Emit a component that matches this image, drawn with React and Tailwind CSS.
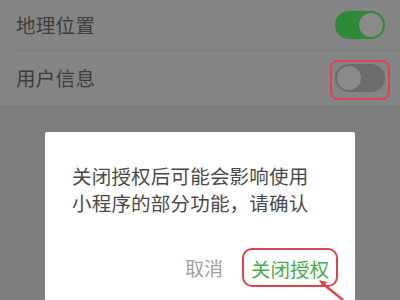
import React from 'react';

const font = { fontFamily: '"Noto Sans CJK SC", "Noto Sans", sans-serif' };

const Toggle = ({ on }) => (
  <div
    className={`w-[50px] h-[28px] rounded-full p-[2px] flex items-center ${
      on ? 'bg-[#2f8a37] justify-end' : 'bg-[#6c6c6c] justify-start'
    }`}
  >
    <div className="w-[24px] h-[24px] rounded-full bg-[#8a8a8a]" />
  </div>
);

export default function App() {
  return (
    <div
      className="relative w-[400px] h-[300px] overflow-hidden bg-[#7e7e7e]"
      style={font}
    >
      {/* settings list (dimmed) */}
      <div className="bg-[#858585] pl-[16px]">
        <div className="h-[51px] flex items-center justify-between pr-[15px] border-b border-[#7b7b7b]">
          <span className="text-[19.5px] text-[#3d3d3d] tracking-[0.3px]">地理位置</span>
          <Toggle on />
        </div>
        <div className="h-[54px] flex items-center justify-between pr-[15px]">
          <span className="text-[19.5px] text-[#3d3d3d] tracking-[0.3px]">用户信息</span>
          <Toggle />
        </div>
      </div>

      {/* annotation around toggle */}
      <div className="absolute left-[330px] top-[60px] w-[60px] h-[40px] rounded-[8px] border-2 border-[#e0434c]" />

      {/* dialog */}
      <div className="absolute left-[45px] top-[132px] w-[310px] h-[200px] bg-white rounded-[2px]">
        <div className="pt-[30px] pl-[27px] pr-[20px] text-[19.5px] leading-[27px] text-[#4a4a4a] tracking-[0.2px]">
          <p>关闭授权后可能会影响使用</p>
          <p>小程序的部分功能，请确认</p>
        </div>
        <div className="flex justify-end items-center gap-[28px] pr-[26px] mt-[38px]">
          <span className="text-[19px] text-[#a0a0a0]">取消</span>
          <span className="text-[19.5px] text-[#46ad4e]">关闭授权</span>
        </div>
      </div>

      {/* annotation around confirm button */}
      <div className="absolute left-[242px] top-[248px] w-[96px] h-[39px] rounded-[10px] border-2 border-[#e0434c]" />
      <svg className="absolute left-0 top-0" width="400" height="300">
        <line x1="322" y1="283" x2="343" y2="300" stroke="#e0434c" strokeWidth="2.5" />
        <path d="M319 280 L327 282 L323 287 Z" fill="#e0434c" />
      </svg>
    </div>
  );
}
